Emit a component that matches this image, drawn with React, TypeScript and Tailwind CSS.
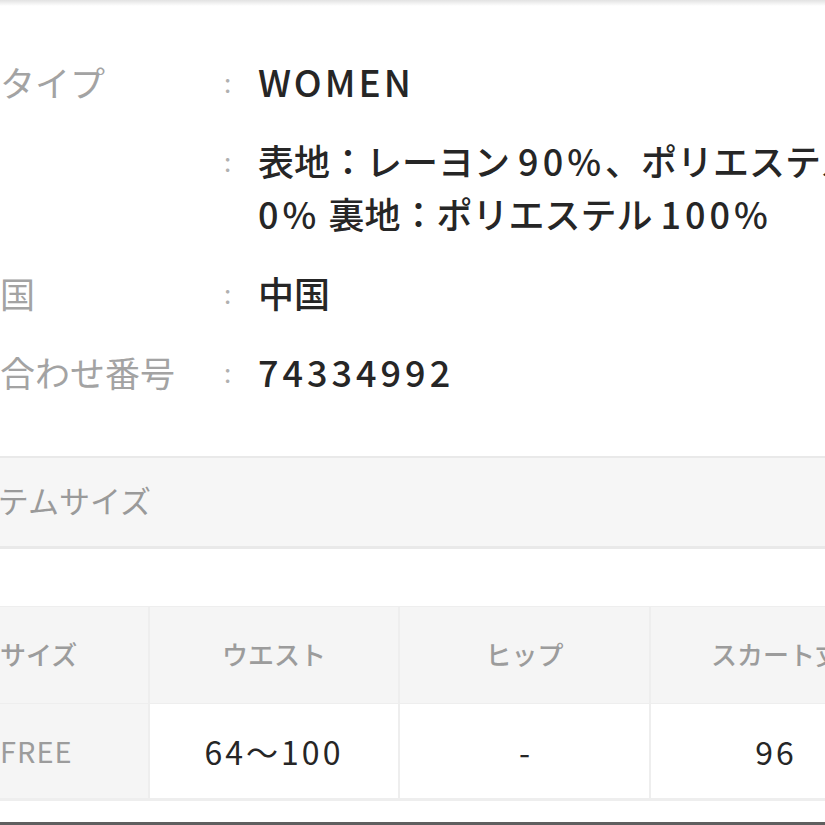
import React from "react";

const FONT = { fontFamily: '"Noto Sans CJK JP", "Noto Sans", sans-serif' };

function L({ children, w = "tracking-[4px]" }: { children: React.ReactNode; w?: string }) {
  return <span className={w}>{children}</span>;
}

function InfoRow({ label, children }: { label: string; children: React.ReactNode }) {
  return (
    <div className="grid grid-cols-[294px_34px_1fr] items-start">
      <div className="text-[35px] leading-[53px] text-[#a3a3a3] whitespace-nowrap">{label}</div>
      <div className="text-[26px] leading-[53px] text-[#b0b0b0]">:</div>
      <div className="text-[36px] leading-[53px] text-[#262626] font-medium whitespace-nowrap">
        {children}
      </div>
    </div>
  );
}

export default function App() {
  return (
    <div className="w-[825px] h-[825px] overflow-hidden bg-white flex flex-col" style={FONT}>
      <div className="h-[6px] bg-gradient-to-b from-[#e2e2e2] to-white shrink-0" />
      <div className="ml-[-70px] pt-[49px] flex flex-col gap-[26px]">
        <InfoRow label="性別タイプ">
          <span className="text-[37px] tracking-[3px]">WOMEN</span>
        </InfoRow>
        <InfoRow label="素材">
          表地：レーヨン <L>90%</L>、ポリエステル <L>1</L>
          <br />
          <L>0%</L> 裏地：ポリエステル <L>100%</L>
        </InfoRow>
        <InfoRow label="原産国">中国</InfoRow>
        <InfoRow label="問い合わせ番号">
          <L>74334992</L>
        </InfoRow>
      </div>
      <div className="mt-[58px] border-t-2 border-b-[3px] border-[#e9e9e9] bg-[#f6f6f6] h-[93px] flex items-center shrink-0">
        <div className="ml-[-62px] pb-[4px] text-[31px] text-[#9a9a9a] whitespace-nowrap">アイテムサイズ</div>
      </div>
      <div className="mt-[57px] w-[1100px] shrink-0 border-t border-b-[3px] border-[#eeeeee] bg-[#eeeeee] grid grid-cols-[148px_248px_249px_250px_1fr] gap-x-[2px] gap-y-[1px]">
        <div className="h-[96px] pb-[4px] bg-[#f5f5f5] flex items-center text-[26px] text-[#9c9c9c] font-medium">サイズ</div>
        <div className="h-[96px] pb-[4px] bg-[#f5f5f5] flex items-center justify-center text-[26px] text-[#9c9c9c] font-medium">ウエスト</div>
        <div className="h-[96px] pb-[4px] bg-[#f5f5f5] flex items-center justify-center text-[26px] text-[#9c9c9c] font-medium">ヒップ</div>
        <div className="h-[96px] pb-[4px] bg-[#f5f5f5] flex items-center justify-center text-[26px] text-[#9c9c9c] font-medium whitespace-nowrap">スカート丈</div>
        <div className="h-[96px] bg-[#f5f5f5]" />
        <div className="h-[94px] bg-[#f5f5f5] flex items-center text-[29px] text-[#9c9c9c] tracking-[1px]">FREE</div>
        <div className="h-[94px] bg-white flex items-center justify-center text-[32px] text-[#262626] tracking-[3px]">64〜100</div>
        <div className="h-[94px] bg-white flex items-center justify-center text-[32px] text-[#262626]">-</div>
        <div className="h-[94px] bg-white flex items-center justify-center text-[32px] text-[#262626] tracking-[3px]">96</div>
        <div className="h-[94px] bg-white" />
      </div>
      <div className="flex-1" />
      <div className="h-[3px] bg-[#5f5f5f] shrink-0" />
    </div>
  );
}
